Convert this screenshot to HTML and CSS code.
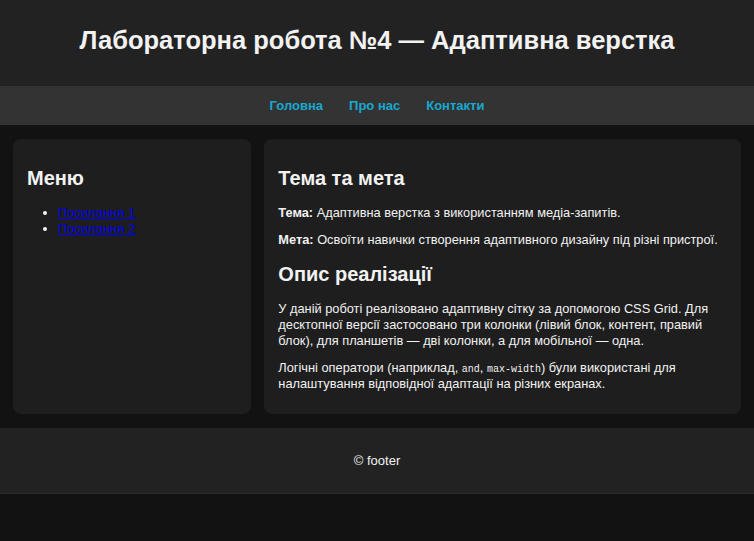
FILE: index.html
```html
<!DOCTYPE html>
<html lang="uk">
<head>
<meta charset="utf-8">
<title>Лабораторна робота №4</title>
<link rel="stylesheet" href="styles.css">
</head>
<body>
<header class="site-header">
  <h1 class="title">Лабораторна робота №4 — Адаптивна верстка</h1>
</header>
<nav class="site-nav">
  <a href="#" class="nav-link">Головна</a>
  <a href="#" class="nav-link">Про нас</a>
  <a href="#" class="nav-link">Контакти</a>
</nav>
<main class="layout">
  <aside class="card side">
    <h2 class="card-title">Меню</h2>
    <ul class="menu">
      <li><a href="#" class="menu-link">Посилання 1</a></li>
      <li><a href="#" class="menu-link">Посилання 2</a></li>
    </ul>
  </aside>
  <section class="card content">
    <h2 class="card-title">Тема та мета</h2>
    <p class="text"><strong>Тема:</strong> Адаптивна верстка з використанням медіа-запитів.</p>
    <p class="text"><strong>Мета:</strong> Освоїти навички створення адаптивного дизайну під різні пристрої.</p>
    <h2 class="card-title">Опис реалізації</h2>
    <p class="text">У даній роботі реалізовано адаптивну сітку за допомогою CSS Grid. Для десктопної версії застосовано три колонки (лівий блок, контент, правий блок), для планшетів — дві колонки, а для мобільної — одна.</p>
    <p class="text">Логічні оператори (наприклад, <code class="code">and</code>, <code class="code">max-width</code>) були використані для налаштування відповідної адаптації на різних екранах.</p>
  </section>
</main>
<footer class="site-footer">
  <p class="footer-text">© footer</p>
</footer>
</body>
</html>
```

FILE: styles.css
```css
html, body {
  margin: 0;
  padding: 0;
}
body {
  background: #121212;
  color: #f2f2f2;
  font-family: "Liberation Sans", Arial, sans-serif;
  font-size: 14px;
}
.site-header {
  background: #222222;
  height: 86px;
  box-sizing: border-box;
  padding-bottom: 5px;
  display: flex;
  align-items: center;
  justify-content: center;
}
.title {
  margin: 0;
  font-size: 25.5px;
  font-weight: bold;
  color: #f2f2f2;
}
.site-nav {
  background: #333333;
  height: 39px;
  display: flex;
  align-items: center;
  justify-content: center;
  gap: 26px;
}
.nav-link {
  color: #17a9cf;
  text-decoration: none;
  font-weight: bold;
  font-size: 13px;
}
.layout {
  display: grid;
  grid-template-columns: 1fr 2fr;
  gap: 13px;
  padding: 14px 13px;
}
.card {
  background: #1e1e1e;
  border-radius: 8px;
  padding: 13px 14px 11px;
}
.card-title {
  font-size: 20px;
  line-height: 23px;
  margin: 15px 0;
}
.menu {
  margin: 0;
  padding-left: 31px;
  font-size: 13px;
  line-height: 16px;
}
.menu-link {
  color: #0000ee;
}
.text {
  margin: 11px 0;
  font-size: 12.8px;
  line-height: 16px;
}
.code {
  font-family: "Liberation Mono", "Courier New", monospace;
  font-size: 10px;
  line-height: 1;
}
.site-footer {
  background: #222222;
  height: 65px;
  display: flex;
  align-items: center;
  justify-content: center;
  border-bottom: 1px solid #2a2a2a;
}
.footer-text {
  margin: 0;
  font-size: 13px;
}
```
